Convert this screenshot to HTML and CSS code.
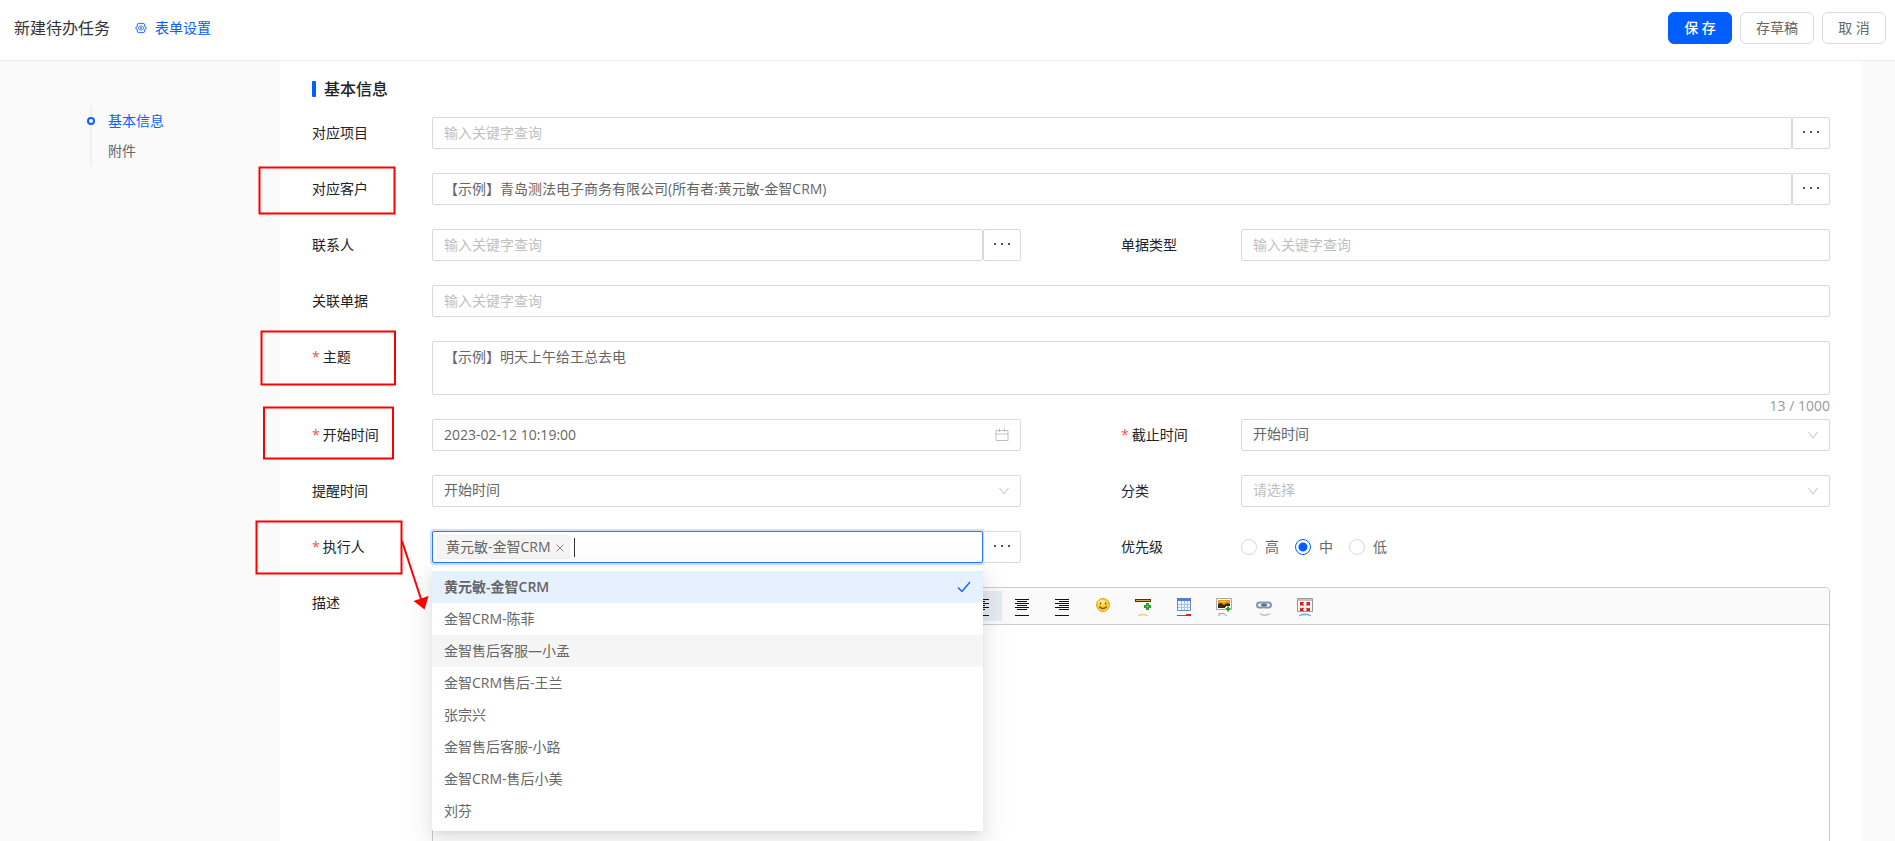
FILE: index.html
```html
<!DOCTYPE html>
<html lang="zh-CN">
<head>
    <meta charset="UTF-8">
    <title>新建待办任务</title>
    <link rel="stylesheet" href="styles.css">
</head>
<body>
    <!-- 顶部 -->
    <header class="header">
        <h1 class="title">新建待办任务</h1>
        <a href="#" class="setting">
            <svg width="12" height="12" viewBox="0 0 12 12" fill="none" stroke="currentColor">
                <path d="M3.200 1.300 4.800 1.700 6 1l1.200.7 1.600-.4 1 1.500-.2 1.200L11.400 6 9.600 8l.2 1.200-1 1.500-1.600-.4L6 11l-1.200-.7-1.600.4-1-1.500L2.400 8 .6 6l1.800-2-.2-1.200z"/>
                <path d="M4.600 4h2.800L9 6 7.400 8H4.600L3 6z" stroke-width=".8"/>
                <circle cx="6" cy="6" r=".6"/>
            </svg>
            表单设置
        </a>
        <div class="btns">
            <button type="button" class="btn primary">保 存</button>
            <button type="button" class="btn">存草稿</button>
            <button type="button" class="btn">取 消</button>
        </div>
    </header>

    <div class="page">
        <!-- 左侧锚点 -->
        <nav class="side">
            <ul class="anchor">
                <li><a href="#base" class="active">基本信息</a></li>
                <li><a href="#file">附件</a></li>
            </ul>
        </nav>

        <!-- 表单 -->
        <main class="main">
            <h2 class="section" id="base">基本信息</h2>
            <form class="form">
                <div class="item full">
                    <label for="project">对应项目</label>
                    <div class="group">
                        <input type="text" class="input" id="project" placeholder="输入关键字查询">
                        <button type="button" class="more" aria-label="选择项目"><i></i><i></i><i></i></button>
                    </div>
                </div>
                <div class="item full">
                    <label for="customer">对应客户</label>
                    <div class="group">
                        <input type="text" class="input" id="customer" value="【示例】青岛测法电子商务有限公司(所有者:黄元敏-金智CRM)">
                        <button type="button" class="more" aria-label="选择客户"><i></i><i></i><i></i></button>
                    </div>
                </div>
                <div class="item">
                    <label for="contact">联系人</label>
                    <div class="group">
                        <input type="text" class="input" id="contact" placeholder="输入关键字查询">
                        <button type="button" class="more" aria-label="选择联系人"><i></i><i></i><i></i></button>
                    </div>
                </div>
                <div class="item">
                    <label for="billtype">单据类型</label>
                    <input type="text" class="input" id="billtype" placeholder="输入关键字查询">
                </div>
                <div class="item full">
                    <label for="bill">关联单据</label>
                    <input type="text" class="input" id="bill" placeholder="输入关键字查询">
                </div>
                <div class="item full subject">
                    <label for="subject" class="required">主题</label>
                    <div class="counter">
                        <textarea class="input" id="subject">【示例】明天上午给王总去电</textarea>
                        <span class="count">13 / 1000</span>
                    </div>
                </div>
                <div class="item">
                    <label for="start" class="required">开始时间</label>
                    <div class="suffix">
                        <input type="text" class="input" id="start" value="2023-02-12 10:19:00">
                        <svg width="14" height="14" viewBox="0 0 14 14" fill="none" stroke="currentColor">
                            <path d="M1 2.500h12v10H1zM1 6h12M4.500.5v3.500M9.500.5v3.500"/>
                        </svg>
                    </div>
                </div>
                <div class="item">
                    <label for="end" class="required">截止时间</label>
                    <div class="suffix">
                        <select class="input" id="end"><option>开始时间</option></select>
                        <svg width="10" height="14" viewBox="0 0 10 14" fill="none" stroke="currentColor"><path d="M.5 4 5 10l4.500-6"/></svg>
                    </div>
                </div>
                <div class="item">
                    <label for="remind">提醒时间</label>
                    <div class="suffix">
                        <select class="input" id="remind"><option>开始时间</option></select>
                        <svg width="10" height="14" viewBox="0 0 10 14" fill="none" stroke="currentColor"><path d="M.5 4 5 10l4.500-6"/></svg>
                    </div>
                </div>
                <div class="item">
                    <label for="category">分类</label>
                    <div class="suffix">
                        <select class="input empty" id="category"><option>请选择</option></select>
                        <svg width="10" height="14" viewBox="0 0 10 14" fill="none" stroke="currentColor"><path d="M.5 4 5 10l4.500-6"/></svg>
                    </div>
                </div>
                <div class="item">
                    <label for="executor" class="required">执行人</label>
                    <div class="group executor">
                        <div class="input tags focus">
                            <span class="tag">黄元敏-金智CRM
                                <button type="button" aria-label="移除"><svg width="8" height="8" viewBox="0 0 8 8" fill="none" stroke="currentColor"><path d="M.5.5l7 7M7.500.5l-7 7"/></svg></button>
                            </span>
                            <span class="caret"></span>
                            <input type="text" id="executor">
                        </div>
                        <button type="button" class="more" aria-label="选择执行人"><i></i><i></i><i></i></button>
                        <!-- 下拉列表 -->
                        <ul class="dropdown">
                            <li class="selected">黄元敏-金智CRM
                                <svg width="14" height="12" viewBox="0 0 14 12" fill="none" stroke="currentColor"><path d="M1 6.500 5 10.500 13 1" stroke-width="1.300"/></svg>
                            </li>
                            <li>金智CRM-陈菲</li>
                            <li class="hover">金智售后客服—小孟</li>
                            <li>金智CRM售后-王兰</li>
                            <li>张宗兴</li>
                            <li>金智售后客服-小路</li>
                            <li>金智CRM-售后小美</li>
                            <li>刘芬</li>
                        </ul>
                    </div>
                </div>
                <div class="item">
                    <span class="label">优先级</span>
                    <div class="radios">
                        <label><input type="radio" name="level">高</label>
                        <label><input type="radio" name="level" checked>中</label>
                        <label><input type="radio" name="level">低</label>
                    </div>
                </div>
                <div class="item full">
                    <label for="desc">描述</label>
                    <!-- 富文本编辑器 -->
                    <div class="editor">
                        <div class="toolbar">
                            <div class="tools">
                                <button type="button" class="on" aria-label="左对齐"><svg width="16" height="18" viewBox="0 0 16 18" stroke="#111"><path d="M1 1.500h14M1 3.500h10M1 5.500h14M1 7.500h10M1 9.500h14M1 11.500h10M1 17.500h14"/></svg></button>
                                <button type="button" aria-label="居中"><svg width="16" height="18" viewBox="0 0 16 18" stroke="#111"><path d="M1 1.500h14M3 3.500h10M1 5.500h14M3 7.500h10M1 9.500h14M3 11.500h10M1 17.500h14"/></svg></button>
                                <button type="button" aria-label="右对齐"><svg width="16" height="18" viewBox="0 0 16 18" stroke="#111"><path d="M1 1.500h14M5 3.500h10M1 5.500h14M5 7.500h10M1 9.500h14M5 11.500h10M1 17.500h14"/></svg></button>
                            </div>
                            <div class="tools">
                                <button type="button" aria-label="表情"><svg width="16" height="18" viewBox="0 0 16 18">
                                    <circle cx="8" cy="7" r="6.500" fill="#fc3" stroke="#e8a321"/>
                                    <ellipse cx="7" cy="4.500" rx="4" ry="2.500" fill="#ffe88a"/>
                                    <path d="M5.500 4.500v2M10.500 4.500v2" stroke="#7a4a08" stroke-width="1.300"/>
                                    <path d="M4 8.500q4 4 8 0" fill="none" stroke="#8a5a10" stroke-width="1.200"/>
                                </svg></button>
                                <button type="button" aria-label="分割线"><svg width="16" height="18" viewBox="0 0 16 18">
                                    <path d="M0 1h16v3H0z" fill="#4a3413"/><path d="M1 2.500h14" stroke="#d9a94e"/>
                                    <path d="M12.500 5v7M9 8.500h7" stroke="#2e9a2e" stroke-width="3"/>
                                    <path d="M12.500 6.500v4M10.500 8.500h4" stroke="#5cc24e"/>
                                    <path d="M3 18q5-3 10 0" fill="none" stroke="#f0d070" stroke-width="1.500"/>
                                </svg></button>
                            </div>
                            <div class="tools">
                                <button type="button" aria-label="表格"><svg width="16" height="18" viewBox="0 0 16 18">
                                    <path d="M1.500.5h13v12h-13z" fill="#eef5ff" stroke="#6a8cc4"/><path d="M1 0h14v3H1z" fill="#4f80d0"/>
                                    <path d="M2 6.500h12M2 9.500h12M5.500 3v9M8.500 3v9M11.500 3v9" stroke="#a9c3e8"/>
                                    <path d="M1 17.500h9" stroke="#3f6fc0"/><path d="M10 17h5" stroke="#e02020" stroke-width="2"/>
                                </svg></button>
                                <button type="button" aria-label="图片"><svg width="16" height="18" viewBox="0 0 16 18">
                                    <path d="M.5.5h15v11H.5z" fill="#fff" stroke="#aaa"/><path d="M2 2h12v8H2z" fill="#e89a14"/>
                                    <path d="M2 6l3-1 3 2 3-2 3 1v4H2z" fill="#3a2a10"/><path d="M4 3h6v1H4z" fill="#ffd84a"/>
                                    <path d="M12 8v6M9 11h6" stroke="#fff" stroke-width="4"/><path d="M12 8.500v5M9.500 11h5" stroke="#2fa32f" stroke-width="2"/>
                                    <path d="M3 18v-2.500h5l3 2.500" fill="#eee" stroke="#aaa"/>
                                </svg></button>
                                <button type="button" aria-label="链接"><svg width="16" height="18" viewBox="0 0 16 18" fill="none">
                                    <rect x="1" y="4.500" width="8" height="5" rx="2.500" stroke="#8095b4" stroke-width="2"/>
                                    <rect x="7" y="4.500" width="8" height="5" rx="2.500" stroke="#8095b4" stroke-width="2"/>
                                    <path d="M5 7h6" stroke="#48607f" stroke-width="1.500"/>
                                    <path d="M4 15.500l3 2M12 15.500 9 18M14 15.500l-2 2M8 16v2" stroke="#8fa3bd"/>
                                </svg></button>
                            </div>
                            <div class="tools">
                                <button type="button" aria-label="全屏"><svg width="16" height="18" viewBox="0 0 16 18">
                                    <path d="M.5.5h15v13H.5z" fill="#f6f6f6" stroke="#999"/><path d="M1 1h14v2H1z" fill="#c4c4c4"/>
                                    <path d="M3 4h4L6 5.500l1 1.500-1 1-1.500-1L3 8zM13 4v4l-1.500-1L10 8 9 7l1-1.500L9 4zM3 13V9.500l1.500 1L6 9.500l1 1-1 1L7 13zM13 13H9l1-1.500-1-1 1-1 1.500 1 1.500-1z" fill="#c22"/>
                                    <path d="M2 18q6-4 12 0" fill="#cfe0f7" stroke="#5f92d8"/>
                                </svg></button>
                            </div>
                        </div>
                        <textarea id="desc"></textarea>
                    </div>
                </div>
            </form>
        </main>
    </div>

    <!-- 红框标注 -->
    <svg class="marks" width="440" height="620" viewBox="0 0 440 620" fill="none" stroke="#f00" stroke-width="2">
        <path d="M259.500 167.500h135v46h-135zM261.500 331.500H395v53H261.500zM264 407.500h129v51H264zM256.500 521.500h145v52h-145z"/>
        <path d="M402 541l19 58"/>
        <path d="M424.500 609.500l-11-8.500 15-5z" fill="#f00" stroke="none"/>
    </svg>
</body>
</html>
```
FILE: styles.css
```css
*,*::before{
    margin: 0;
    padding: 0;
    box-sizing: border-box;
}
body{
    height: 100vh;
    display: flex;
    flex-direction: column;
    position: relative;
    overflow: hidden;
    background: #fafafa;
    color: #666;
    font: 14px/22px "Open Sans", "Noto Sans CJK SC", sans-serif;
}
button,input,select,textarea{
    font: inherit;
    color: inherit;
}
ul{
    list-style: none;
}
a{
    color: inherit;
    text-decoration: none;
}

/* 顶部 */
.header{
    display: flex;
    align-items: center;
    flex: none;
    height: 61px;
    padding: 0 9px 5px 14px;
    background: #fff;
    border-bottom: 1px solid #ebebeb;
}
.title{
    font-size: 16px;
    font-weight: 400;
    color: #333;
}
.setting{
    display: flex;
    align-items: center;
    gap: 8px;
    margin-left: 25px;
    color: #0960ff;
}
.btns{
    display: flex;
    gap: 8px;
    margin-left: auto;
}
.btn{
    min-width: 64px;
    height: 32px;
    padding: 0 15px;
    background: #fff;
    border: 1px solid #d9d9d9;
    border-radius: 6px;
}
.btn.primary{
    background: #005eff;
    border-color: #005eff;
    color: #fff;
    font-weight: 500;
}

.page{
    display: flex;
    flex: 1;
    min-height: 0;
    padding-right: 33px;
}

/* 左侧锚点 */
.side{
    width: 280px;
    flex: none;
    padding: 45px 0 0 90px;
}
.anchor{
    border-left: 2px solid #f0f0f0;
}
.anchor a{
    display: block;
    position: relative;
    padding: 4px 0 4px 16px;
}
.anchor .active{
    color: #0960ff;
}
.anchor .active::before{
    content: "";
    position: absolute;
    left: -5px;
    top: 11px;
    width: 8px;
    height: 8px;
    border: 2px solid #0960ff;
    border-radius: 50%;
    background: #fff;
}

/* 表单 */
.main{
    flex: 1;
    min-width: 0;
    overflow: hidden;
    padding: 16px 32px 0;
    background: #fff;
}
.section{
    display: flex;
    align-items: center;
    gap: 8px;
    margin-bottom: 16px;
    font-size: 16px;
    line-height: 24px;
    font-weight: 500;
    color: #222;
}
.section::before{
    content: "";
    width: 4px;
    height: 16px;
    border-radius: 1px;
    background: #005eff;
}
.form{
    display: grid;
    grid-template-columns: 1fr 1fr;
    gap: 24px 100px;
}
.item{
    display: grid;
    grid-template-columns: 120px 1fr;
    align-items: start;
    min-width: 0;
}
.item.full{
    grid-column: 1 / 3;
}
.item > label,.item > .label{
    line-height: 32px;
    color: #222;
}
.required::before{
    content: "*";
    margin-right: 3px;
    color: #ff4d4f;
}
.input{
    display: block;
    width: 100%;
    min-width: 0;
    height: 32px;
    padding: 0 11px 2px;
    background: #fff;
    border: 1px solid #d9d9d9;
    border-radius: 2px;
    outline: none;
    appearance: none;
}
.input::placeholder,.input.empty{
    color: #bfbfbf;
}
.group{
    display: flex;
    position: relative;
}
.group .input{
    flex: 1;
}
.more{
    display: flex;
    align-items: center;
    justify-content: center;
    gap: 5px;
    width: 38px;
    height: 32px;
    padding-bottom: 2px;
    background: #fff;
    border: 1px solid #d9d9d9;
    border-radius: 2px;
}
.more i{
    width: 2px;
    height: 2px;
    background: #555;
}
.subject{
    margin-bottom: -24px;
}
textarea.input{
    height: 54px;
    padding: 4px 11px;
    resize: none;
}
.count{
    display: block;
    height: 24px;
    line-height: 22px;
    text-align: right;
    color: #999;
}
.suffix{
    position: relative;
}
.suffix svg{
    position: absolute;
    right: 12px;
    top: 9px;
    color: #bfbfbf;
    pointer-events: none;
}

/* 执行人 */
.tags{
    display: flex;
    align-items: center;
    padding: 0 4px;
}
.tags.focus{
    border-color: #2b79ff;
    box-shadow: 0 0 0 2px #cfdfff;
}
.tag{
    display: flex;
    align-items: center;
    gap: 5px;
    height: 24px;
    padding: 0 5px 0 8px;
    background: #f5f5f5;
    border: 1px solid #f0f0f0;
    border-radius: 2px;
    white-space: nowrap;
}
.tag button{
    display: flex;
    padding-top: 2px;
    background: none;
    border: 0;
    color: #888;
}
.caret{
    width: 1px;
    height: 19px;
    margin-left: 4px;
    background: #333;
}
.tags input{
    flex: 1;
    min-width: 0;
    border: 0;
    outline: none;
    background: none;
}
.dropdown{
    position: absolute;
    left: 0;
    right: 38px;
    top: 36px;
    z-index: 2;
    padding: 4px 0;
    background: #fff;
    border-radius: 2px;
    box-shadow: 0 3px 6px -4px rgba(0,0,0,.12), 0 6px 16px rgba(0,0,0,.08), 0 9px 28px 8px rgba(0,0,0,.05);
}
.dropdown li{
    display: flex;
    align-items: center;
    justify-content: space-between;
    height: 32px;
    padding: 0 12px;
}
.dropdown .selected{
    background: #e6f1ff;
    font-weight: 600;
}
.dropdown .selected svg{
    color: #0960ff;
}
.dropdown .hover{
    background: #f5f5f5;
}

.radios{
    display: flex;
    gap: 16px;
}
.radios label{
    display: flex;
    align-items: center;
    gap: 8px;
    height: 32px;
}
.radios input{
    appearance: none;
    width: 16px;
    height: 16px;
    border: 1px solid #d9d9d9;
    border-radius: 50%;
    background: #fff;
}
.radios input:checked{
    border-color: #005eff;
    background: radial-gradient(#005eff 4px, #fff 5px);
}

/* 编辑器 */
.editor{
    height: 400px;
    border: 1px solid #ccc;
    border-radius: 4px;
}
.toolbar{
    display: flex;
    align-items: center;
    gap: 1px;
    height: 37px;
    padding-left: 529px;
    background: #fafafa;
    border-bottom: 1px solid #ccc;
    border-radius: 4px 4px 0 0;
}
.tools{
    display: flex;
}
.tools button{
    display: flex;
    align-items: center;
    justify-content: center;
    width: 40px;
    height: 30px;
    padding-top: 2px;
    background: none;
    border: 0;
}
.tools .on{
    background: #e5eaf3;
}
.editor textarea{
    display: block;
    width: 100%;
    height: 360px;
    border: 0;
    outline: none;
    resize: none;
    background: none;
}

/* 标注 */
.marks{
    position: absolute;
    left: 0;
    top: 0;
    z-index: 3;
    pointer-events: none;
}
```
